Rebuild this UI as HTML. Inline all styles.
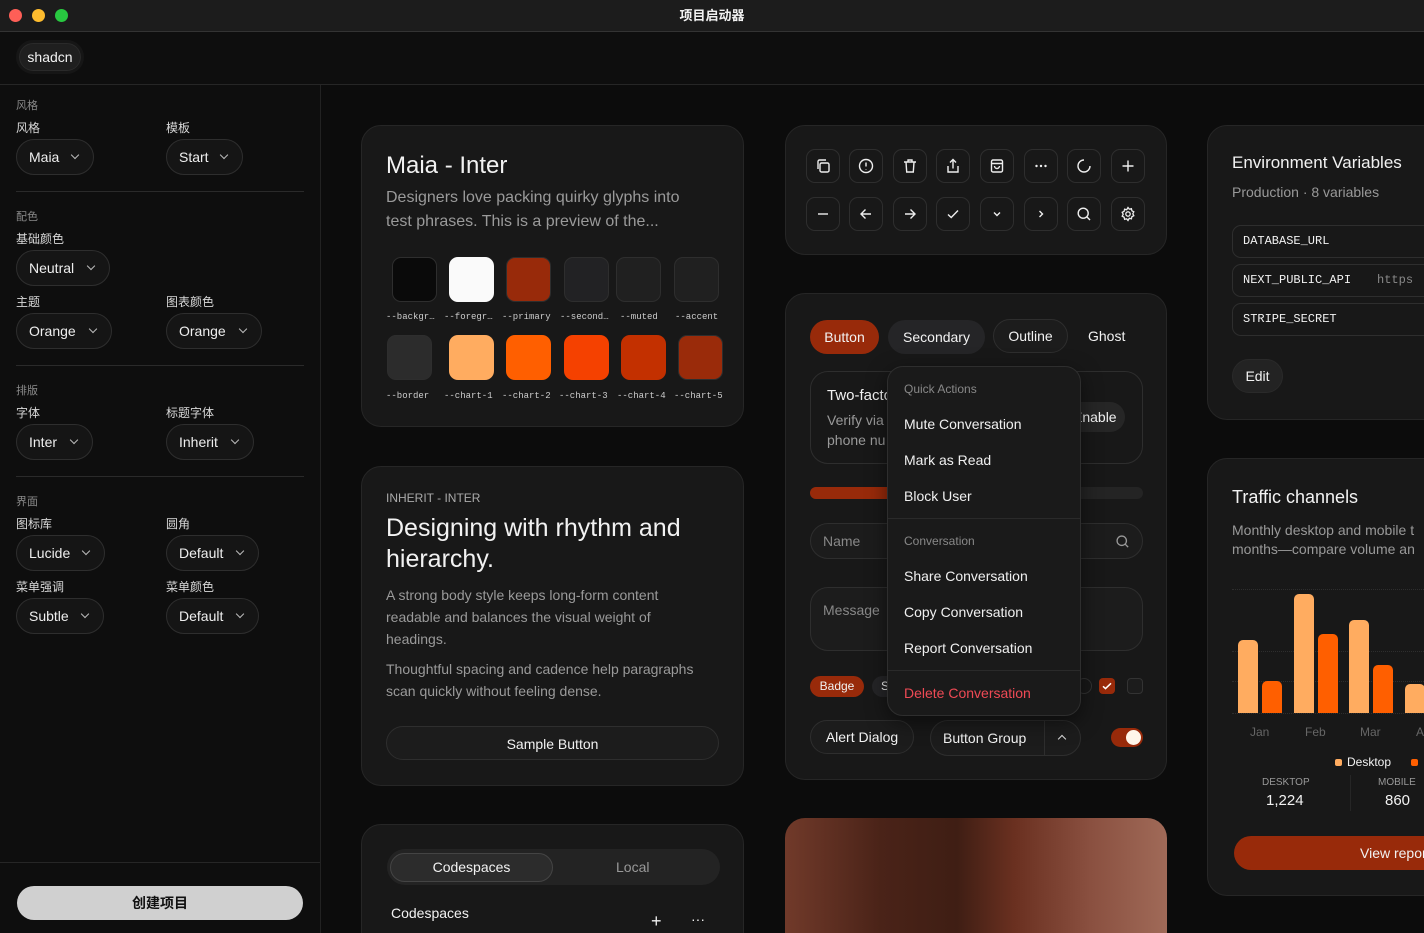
<!DOCTYPE html>
<html style="width:1424px;height:933px;overflow:hidden"><head><meta charset="utf-8"><style>
*{box-sizing:border-box;margin:0;padding:0}
body{width:1424px;height:933px;background:#0c0c0c;font-family:"Liberation Sans","Noto Sans CJK SC",sans-serif;color:#f2f2f2;position:relative;overflow:hidden}
.abs{position:absolute}
.tb{left:0;top:0;width:1424px;height:32px;background:#1c1c1c;border-bottom:1px solid #333;text-align:center;font-size:13px;font-weight:bold;line-height:31px}
.dot{position:absolute;top:9px;width:13px;height:13px;border-radius:50%}
.hdr{left:0;top:32px;width:1424px;height:53px;border-bottom:1px solid #262626;background:#0e0e0e}
.side{left:0;top:85px;width:321px;height:848px;border-right:1px solid #222;background:#0e0e0e}
.lbl{font-size:11px;color:#8a8a8a}
.lbl2{font-size:12px;color:#d8d8d8}
.sel{position:absolute;height:36px;border:1px solid #2e2e2e;background:#151515;border-radius:18px;font-size:14px;line-height:34px;padding-left:12px;color:#eee}
.sel:after{content:"";position:absolute;right:15px;top:12px;width:5px;height:5px;border-right:1.3px solid #bbb;border-bottom:1.3px solid #bbb;transform:rotate(45deg)}
.hr{position:absolute;left:16px;width:288px;height:1px;background:#2a2a2a}
.card{position:absolute;background:#181818;border:1px solid #262626;border-radius:20px}
.sw{position:absolute;width:45px;height:45px;border-radius:9px;border:1px solid #2e2e2e}
.swl{position:absolute;font-family:"Liberation Mono",monospace;font-size:9px;color:#ccc}
.ib{position:absolute;width:34px;height:34px;border:1px solid #2e2e2e;border-radius:9px}
.ib svg{position:absolute;left:8px;top:8px}
.pill{position:absolute;height:34px;border-radius:17px;font-size:14px;line-height:34px;text-align:center}
.mi{position:absolute;left:16px;font-size:14px;color:#f0f0f0}
</style></head><body>
<div class="abs tb">项目启动器
<div class="dot" style="left:9px;background:#fe5f57"></div><div class="dot" style="left:32px;background:#febc2e"></div><div class="dot" style="left:55px;background:#28c840"></div></div>
<div class="abs hdr"><div class="abs" style="left:16px;top:8px;width:68px;height:34px;border-radius:17px;background:#1f1f1f;border:3px solid #161616;box-shadow:0 0 0 1px #2a2a2a inset;font-size:14px;text-align:center;line-height:28px">shadcn</div></div>
<div class="abs side">
<div class="abs lbl" style="left:16px;top:12px">风格</div>
<div class="abs lbl2" style="left:16px;top:34px">风格</div><div class="abs lbl2" style="left:166px;top:34px">模板</div>
<div class="sel" style="left:16px;top:54px;width:78px">Maia</div><div class="sel" style="left:166px;top:54px;width:77px">Start</div>
<div class="hr" style="top:106px"></div>
<div class="abs lbl" style="left:16px;top:123px">配色</div>
<div class="abs lbl2" style="left:16px;top:145px">基础颜色</div>
<div class="sel" style="left:16px;top:165px;width:94px">Neutral</div>
<div class="abs lbl2" style="left:16px;top:208px">主题</div><div class="abs lbl2" style="left:166px;top:208px">图表颜色</div>
<div class="sel" style="left:16px;top:228px;width:96px">Orange</div><div class="sel" style="left:166px;top:228px;width:96px">Orange</div>
<div class="hr" style="top:280px"></div>
<div class="abs lbl" style="left:16px;top:297px">排版</div>
<div class="abs lbl2" style="left:16px;top:319px">字体</div><div class="abs lbl2" style="left:166px;top:319px">标题字体</div>
<div class="sel" style="left:16px;top:339px;width:77px">Inter</div><div class="sel" style="left:166px;top:339px;width:88px">Inherit</div>
<div class="hr" style="top:391px"></div>
<div class="abs lbl" style="left:16px;top:408px">界面</div>
<div class="abs lbl2" style="left:16px;top:430px">图标库</div><div class="abs lbl2" style="left:166px;top:430px">圆角</div>
<div class="sel" style="left:16px;top:450px;width:89px">Lucide</div><div class="sel" style="left:166px;top:450px;width:93px">Default</div>
<div class="abs lbl2" style="left:16px;top:493px">菜单强调</div><div class="abs lbl2" style="left:166px;top:493px">菜单颜色</div>
<div class="sel" style="left:16px;top:513px;width:88px">Subtle</div><div class="sel" style="left:166px;top:513px;width:93px">Default</div>
<div class="abs" style="left:0;top:777px;width:320px;height:1px;background:#262626"></div>
<div class="abs" style="left:17px;top:801px;width:286px;height:34px;border-radius:17px;background:#d0d0d0;color:#111;font-size:14px;text-align:center;line-height:34px;font-weight:bold">创建项目</div>
</div>

<!-- Card A -->
<div class="card" style="left:361px;top:125px;width:383px;height:302px">
<div class="abs" style="left:24px;top:26px;font-size:24px">Maia - Inter</div>
<div class="abs" style="left:24px;top:60px;width:322px;font-size:16px;line-height:24px;color:#9a9a9a">Designers love packing quirky glyphs into test phrases. This is a preview of the...</div>
<div class="sw" style="left:30px;top:131px;background:#0a0a0a"></div><div class="sw" style="left:87px;top:131px;background:#fafafa;border-color:#fafafa"></div><div class="sw" style="left:144px;top:131px;background:#982a0a"></div><div class="sw" style="left:202px;top:131px;background:#222224"></div><div class="sw" style="left:254px;top:131px;background:#202020"></div><div class="sw" style="left:312px;top:131px;background:#202020"></div>
<div class="swl" style="left:24px;top:186px">--backgr…</div><div class="swl" style="left:82px;top:186px">--foregr…</div><div class="swl" style="left:140px;top:186px">--primary</div><div class="swl" style="left:198px;top:186px">--second…</div><div class="swl" style="left:258px;top:186px">--muted</div><div class="swl" style="left:313px;top:186px">--accent</div>
<div class="sw" style="left:25px;top:209px;background:#2c2c2c"></div><div class="sw" style="left:87px;top:209px;background:#ffac60;border:0"></div><div class="sw" style="left:144px;top:209px;background:#ff5f00;border:0"></div><div class="sw" style="left:202px;top:209px;background:#f54100;border:0"></div><div class="sw" style="left:259px;top:209px;background:#c33000;border:0"></div><div class="sw" style="left:316px;top:209px;background:#9a2b0a"></div>
<div class="swl" style="left:24px;top:265px">--border</div><div class="swl" style="left:82px;top:265px">--chart-1</div><div class="swl" style="left:140px;top:265px">--chart-2</div><div class="swl" style="left:197px;top:265px">--chart-3</div><div class="swl" style="left:255px;top:265px">--chart-4</div><div class="swl" style="left:312px;top:265px">--chart-5</div>
</div>

<!-- Card B -->
<div class="card" style="left:361px;top:466px;width:383px;height:320px">
<div class="abs" style="left:24px;top:24px;font-size:12px;color:#aaa">INHERIT - INTER</div>
<div class="abs" style="left:24px;top:46px;width:340px;font-size:25px;line-height:31px">Designing with rhythm and hierarchy.</div>
<div class="abs" style="left:24px;top:117px;width:310px;font-size:14px;line-height:22px;color:#9a9a9a">A strong body style keeps long-form content readable and balances the visual weight of headings.</div>
<div class="abs" style="left:24px;top:191px;width:340px;font-size:14px;line-height:22px;color:#9a9a9a">Thoughtful spacing and cadence help paragraphs scan quickly without feeling dense.</div>
<div class="pill" style="left:24px;top:259px;width:333px;background:#1c1c1c;border:1px solid #2e2e2e">Sample Button</div>
</div>

<!-- Card C -->
<div class="card" style="left:361px;top:824px;width:383px;height:140px">
<div class="abs" style="left:25px;top:24px;width:333px;height:36px;border-radius:18px;background:#232323"></div>
<div class="abs" style="left:28px;top:28px;width:163px;height:29px;border-radius:15px;background:#2c2c2c;border:1px solid #444;font-size:14px;text-align:center;line-height:27px">Codespaces</div>
<div class="abs" style="left:254px;top:34px;font-size:14px;color:#999">Local</div>
<div class="abs" style="left:29px;top:80px;font-size:14px">Codespaces</div>
<div class="abs" style="left:289px;top:86px;font-size:18px">+</div><div class="abs" style="left:329px;top:86px;font-size:14px">···</div>
</div>

<!-- Card D icons -->
<div class="card" style="left:785px;top:125px;width:382px;height:130px">
<div class="ib" style="left:20px;top:23px"><svg width="16" height="16" viewBox="0 0 16 16" fill="none" stroke="#eee" stroke-width="1.4"><rect x="5" y="5" width="9" height="9" rx="1.5"/><path d="M3 11V3.5A1.5 1.5 0 0 1 4.5 2H11"/></svg></div>
<div class="ib" style="left:63px;top:23px"><svg width="16" height="16" viewBox="0 0 16 16" fill="none" stroke="#eee" stroke-width="1.4"><circle cx="8" cy="8" r="6.5"/><path d="M8 4.5v4M8 11v.5"/></svg></div>
<div class="ib" style="left:107px;top:23px"><svg width="16" height="16" viewBox="0 0 16 16" fill="none" stroke="#eee" stroke-width="1.4"><path d="M2 4h12M6 4V2h4v2M4 4l.7 10h6.6L12 4"/></svg></div>
<div class="ib" style="left:150px;top:23px"><svg width="16" height="16" viewBox="0 0 16 16" fill="none" stroke="#eee" stroke-width="1.4"><path d="M8 1.5v9M5 4.5l3-3 3 3M3 8v6h10V8"/></svg></div>
<div class="ib" style="left:194px;top:23px"><svg width="16" height="16" viewBox="0 0 16 16" fill="none" stroke="#eee" stroke-width="1.4"><rect x="2.5" y="2" width="11" height="12" rx="1.5"/><path d="M2.5 5.5h11M5.5 8a2.5 2.5 0 0 0 5 0"/></svg></div>
<div class="ib" style="left:238px;top:23px"><svg width="16" height="16" viewBox="0 0 16 16" fill="#eee"><circle cx="3.5" cy="8" r="1.2"/><circle cx="8" cy="8" r="1.2"/><circle cx="12.5" cy="8" r="1.2"/></svg></div>
<div class="ib" style="left:281px;top:23px"><svg width="16" height="16" viewBox="0 0 16 16" fill="none" stroke="#eee" stroke-width="1.4"><path d="M14 8a6 6 0 1 1-6-6"/></svg></div>
<div class="ib" style="left:325px;top:23px"><svg width="16" height="16" viewBox="0 0 16 16" fill="none" stroke="#eee" stroke-width="1.4"><path d="M8 2.5v11M2.5 8h11"/></svg></div>
<div class="ib" style="left:20px;top:71px"><svg width="16" height="16" viewBox="0 0 16 16" fill="none" stroke="#eee" stroke-width="1.4"><path d="M3 8h10"/></svg></div>
<div class="ib" style="left:63px;top:71px"><svg width="16" height="16" viewBox="0 0 16 16" fill="none" stroke="#eee" stroke-width="1.4"><path d="M13 8H3M7.5 3.5L3 8l4.5 4.5"/></svg></div>
<div class="ib" style="left:107px;top:71px"><svg width="16" height="16" viewBox="0 0 16 16" fill="none" stroke="#eee" stroke-width="1.4"><path d="M3 8h10M8.5 3.5L13 8l-4.5 4.5"/></svg></div>
<div class="ib" style="left:150px;top:71px"><svg width="16" height="16" viewBox="0 0 16 16" fill="none" stroke="#eee" stroke-width="1.4"><path d="M3 8.5l3.2 3L13 4.5"/></svg></div>
<div class="ib" style="left:194px;top:71px"><svg width="16" height="16" viewBox="0 0 16 16" fill="none" stroke="#eee" stroke-width="1.4"><path d="M5 6.5l3 3 3-3"/></svg></div>
<div class="ib" style="left:238px;top:71px"><svg width="16" height="16" viewBox="0 0 16 16" fill="none" stroke="#eee" stroke-width="1.4"><path d="M6.5 5l3 3-3 3"/></svg></div>
<div class="ib" style="left:281px;top:71px"><svg width="16" height="16" viewBox="0 0 16 16" fill="none" stroke="#eee" stroke-width="1.4"><circle cx="7.2" cy="7.2" r="5"/><path d="M11 11l3 3"/></svg></div>
<div class="ib" style="left:325px;top:71px"><svg width="16" height="16" viewBox="0 0 16 16" fill="none" stroke="#eee" stroke-width="1.3"><circle cx="8" cy="8" r="2.2"/><path d="M8 1.5l1.3 1.7 2.1-.5.5 2.1 1.9 1-1 1.9 1 2-1.9 1-.5 2.1-2.1-.5L8 14.5l-1.3-1.7-2.1.5-.5-2.1-1.9-1 1-2-1-1.9 1.9-1 .5-2.1 2.1.5z"/></svg></div>
</div>

<!-- Card E -->
<div class="card" style="left:785px;top:293px;width:382px;height:487px">
<div class="pill" style="left:24px;top:26px;width:69px;background:#982a0a">Button</div>
<div class="pill" style="left:102px;top:26px;width:97px;background:#252527">Secondary</div>
<div class="pill" style="left:207px;top:25px;width:75px;background:#1c1c1c;border:1px solid #2e2e2e;line-height:33px">Outline</div>
<div class="abs" style="left:302px;top:34px;font-size:14px">Ghost</div>
<div class="abs" style="left:24px;top:77px;width:333px;height:93px;border:1px solid #2e2e2e;border-radius:18px">
<div class="abs" style="left:16px;top:15px;font-size:15px">Two-factor</div>
<div class="abs" style="left:16px;top:38px;font-size:14px;line-height:20px;color:#999">Verify via<br>phone nu</div>
<div class="abs" style="left:250px;top:30px;width:64px;height:30px;border-radius:15px;background:#262626;font-size:14px;line-height:30px;padding-left:12px">Enable</div></div>
<div class="abs" style="left:24px;top:193px;width:333px;height:12px;border-radius:6px;background:#242424"><div style="width:90px;height:12px;border-radius:6px;background:#982a0a"></div></div>
<div class="abs" style="left:24px;top:229px;width:333px;height:36px;border:1px solid #2e2e2e;border-radius:18px;background:#1c1c1c;font-size:14px;color:#888;line-height:34px;padding-left:12px">Name<svg class="abs" style="right:12px;top:10px" width="15" height="15" viewBox="0 0 16 16" fill="none" stroke="#999" stroke-width="1.4"><circle cx="7.2" cy="7.2" r="5"/><path d="M11 11l3 3"/></svg></div>
<div class="abs" style="left:24px;top:293px;width:333px;height:64px;border:1px solid #2e2e2e;border-radius:18px;background:#1c1c1c;font-size:14px;color:#888;padding:14px 12px">Message</div>
<div class="abs" style="left:24px;top:382px;width:54px;height:21px;border-radius:11px;background:#982a0a;font-size:12px;line-height:21px;text-align:center">Badge</div>
<div class="abs" style="left:86px;top:382px;width:40px;height:21px;border-radius:11px;background:#252527;font-size:12px;line-height:21px;padding-left:9px">S</div>
<div class="abs" style="left:290px;top:384px;width:16px;height:16px;border-radius:50%;border:1px solid #333"></div>
<div class="abs" style="left:313px;top:384px;width:16px;height:16px;border-radius:4px;background:#982a0a"><svg width="16" height="16" viewBox="0 0 16 16" fill="none" stroke="#fff" stroke-width="1.5"><path d="M4 8.3l2.5 2.3L12 5.3"/></svg></div>
<div class="abs" style="left:341px;top:384px;width:16px;height:16px;border-radius:4px;border:1px solid #333;background:#1c1c1c"></div>
<div class="pill" style="left:24px;top:426px;width:104px;background:#1c1c1c;border:1px solid #2e2e2e;line-height:32px">Alert Dialog</div>
<div class="abs" style="left:144px;top:426px;width:151px;height:36px;border-radius:18px;background:#1c1c1c;border:1px solid #2e2e2e;font-size:14px;line-height:34px;padding-left:12px">Button Group<div class="abs" style="left:113px;top:0;width:1px;height:34px;background:#2e2e2e"></div><div class="abs" style="left:128px;top:15px;width:6px;height:6px;border-left:1.4px solid #ddd;border-top:1.4px solid #ddd;transform:rotate(45deg)"></div></div>
<div class="abs" style="left:325px;top:434px;width:32px;height:19px;border-radius:10px;background:#982a0a"><div class="abs" style="left:15px;top:2px;width:15px;height:15px;border-radius:50%;background:#fff6ea"></div></div>
</div>

<!-- Dropdown menu -->
<div class="abs" style="left:887px;top:366px;width:194px;height:350px;background:#1a1a1a;border:1px solid #2e2e2e;border-radius:16px;box-shadow:0 6px 20px rgba(0,0,0,.5)">
<div class="abs" style="left:16px;top:15px;font-size:12px;color:#888">Quick Actions</div>
<div class="mi" style="top:49px">Mute Conversation</div>
<div class="mi" style="top:85px">Mark as Read</div>
<div class="mi" style="top:121px">Block User</div>
<div class="abs" style="left:0;top:151px;width:192px;height:1px;background:#2a2a2a"></div>
<div class="abs" style="left:16px;top:167px;font-size:12px;color:#888">Conversation</div>
<div class="mi" style="top:201px">Share Conversation</div>
<div class="mi" style="top:237px">Copy Conversation</div>
<div class="mi" style="top:273px">Report Conversation</div>
<div class="abs" style="left:0;top:303px;width:192px;height:1px;background:#2a2a2a"></div>
<div class="mi" style="top:318px;color:#ef4a55">Delete Conversation</div>
</div>

<!-- Card F image -->
<div class="abs" style="left:785px;top:818px;width:382px;height:140px;border-radius:20px;background:linear-gradient(90deg,#713a2a 0%,#4a2318 25%,#3f1e14 45%,#6a3020 60%,#8a5040 80%,#a06a58 100%)"></div>

<!-- Card G env -->
<div class="card" style="left:1207px;top:125px;width:240px;height:295px">
<div class="abs" style="left:24px;top:27px;font-size:17px">Environment Variables</div>
<div class="abs" style="left:24px;top:58px;font-size:14px;color:#999">Production · 8 variables</div>
<div class="abs" style="left:24px;top:99px;width:230px;height:33px;border:1px solid #2e2e2e;border-radius:9px;font-family:'Liberation Mono',monospace;font-size:12px;line-height:31px;padding-left:10px">DATABASE_URL</div>
<div class="abs" style="left:24px;top:138px;width:230px;height:33px;border:1px solid #2e2e2e;border-radius:9px;font-family:'Liberation Mono',monospace;font-size:12px;line-height:31px;padding-left:10px">NEXT_PUBLIC_API<span style="color:#888;margin-left:26px">https</span></div>
<div class="abs" style="left:24px;top:177px;width:230px;height:33px;border:1px solid #2e2e2e;border-radius:9px;font-family:'Liberation Mono',monospace;font-size:12px;line-height:31px;padding-left:10px">STRIPE_SECRET</div>
<div class="pill" style="left:24px;top:233px;width:51px;background:#232323;border:1px solid #2a2a2a;line-height:32px">Edit</div>
</div>

<!-- Card H traffic -->
<div class="card" style="left:1207px;top:458px;width:240px;height:438px">
<div class="abs" style="left:24px;top:28px;font-size:18px">Traffic channels</div>
<div class="abs" style="left:24px;top:62px;width:230px;font-size:14px;line-height:19px;color:#999;white-space:nowrap">Monthly desktop and mobile t<br>months—compare volume an</div>
<div class="abs" style="left:24px;top:130px;width:220px;border-top:1px dotted #2e2e2e"></div>
<div class="abs" style="left:24px;top:192px;width:220px;border-top:1px dotted #2e2e2e"></div>
<div class="abs" style="left:24px;top:222px;width:220px;border-top:1px dotted #2e2e2e"></div>
<div class="abs" style="left:24px;top:254px;width:220px;border-top:1px dotted #2e2e2e"></div>
<div class="abs" style="left:30px;top:181px;width:20px;height:73px;background:#ffac60;border-radius:5px 5px 0 0"></div>
<div class="abs" style="left:54px;top:222px;width:20px;height:32px;background:#ff5f00;border-radius:5px 5px 0 0"></div>
<div class="abs" style="left:86px;top:135px;width:20px;height:119px;background:#ffac60;border-radius:5px 5px 0 0"></div>
<div class="abs" style="left:110px;top:175px;width:20px;height:79px;background:#ff5f00;border-radius:5px 5px 0 0"></div>
<div class="abs" style="left:141px;top:161px;width:20px;height:93px;background:#ffac60;border-radius:5px 5px 0 0"></div>
<div class="abs" style="left:165px;top:206px;width:20px;height:48px;background:#ff5f00;border-radius:5px 5px 0 0"></div>
<div class="abs" style="left:197px;top:225px;width:20px;height:29px;background:#ffac60;border-radius:5px 5px 0 0"></div>
<div class="abs" style="left:42px;top:266px;font-size:12px;color:#666">Jan</div>
<div class="abs" style="left:97px;top:266px;font-size:12px;color:#666">Feb</div>
<div class="abs" style="left:152px;top:266px;font-size:12px;color:#666">Mar</div>
<div class="abs" style="left:208px;top:266px;font-size:12px;color:#666">A</div>
<div class="abs" style="left:127px;top:300px;width:7px;height:7px;background:#ffac60;border-radius:2px"></div>
<div class="abs" style="left:139px;top:296px;font-size:12px">Desktop</div>
<div class="abs" style="left:203px;top:300px;width:7px;height:7px;background:#ff5f00;border-radius:2px"></div>
<div class="abs" style="left:54px;top:318px;font-size:10px;color:#999">DESKTOP</div>
<div class="abs" style="left:58px;top:333px;font-size:15px">1,224</div>
<div class="abs" style="left:142px;top:316px;width:1px;height:36px;background:#262626"></div>
<div class="abs" style="left:170px;top:318px;font-size:10px;color:#999">MOBILE</div>
<div class="abs" style="left:177px;top:333px;font-size:15px">860</div>
<div class="abs" style="left:26px;top:377px;width:230px;height:34px;border-radius:17px;background:#982a0a;font-size:14px;line-height:34px;padding-left:126px">View report</div>
</div>
</body></html>
